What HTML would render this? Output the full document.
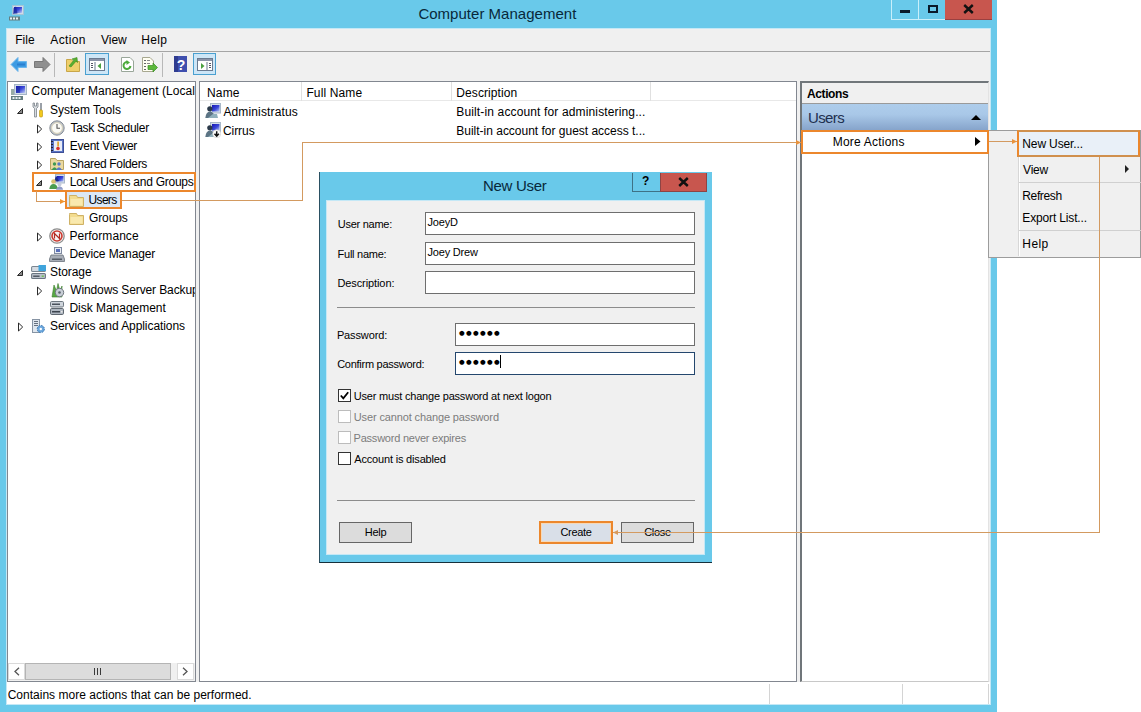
<!DOCTYPE html>
<html><head><meta charset="utf-8"><title>Computer Management</title>
<style>
*{box-sizing:border-box;margin:0;padding:0}
html,body{width:1141px;height:712px;overflow:hidden;background:#fff}
body{position:relative;font-family:"Liberation Sans",sans-serif;font-size:12px;color:#000}
.a{position:absolute}
.t{position:absolute;white-space:nowrap;line-height:18px;height:18px}
.win{left:0;top:0;width:997px;height:712px;background:#69c9ea}
.client{left:7px;top:29px;width:983px;height:675px;background:#f0f0f0}
.pane{background:#fff;border:1px solid #828790}
.ol{position:absolute;background:#d39a60}
.ob{position:absolute;border:2px solid #ec872c}
.dlg{font-size:11px}
.dlg .t{line-height:14px;height:14px}
.inp{position:absolute;background:#fff;border:1px solid #6e6e6e;height:23px}
.btn{position:absolute;background:#dcdcdc;border:1px solid #666;text-align:center;line-height:19px;font-size:11px;letter-spacing:-0.3px}
.cb{position:absolute;width:13px;height:13px;background:#fff;border:1px solid #333}
.cb.dis{border-color:#bcbcbc}
.gray{color:#7c7c7c}
</style></head><body>
<div class="a win"></div>
<!-- title -->
<div class="t" id="title" style="left:418.4px;top:4px;font-size:15px;line-height:20px;height:20px;letter-spacing:0.02px;color:#08283a">Computer Management</div>
<div class="a" style="left:6px;top:28px;width:985px;height:677px;background:#c4e8f6"></div>
<div class="a client"></div>
<!-- caption buttons -->
<div class="a" style="left:891px;top:0;width:55px;height:20px;border:1px solid #c9effa;border-top:0"></div>
<div class="a" style="left:918px;top:0;width:1px;height:19px;background:#c9effa"></div>
<div class="a" style="left:900px;top:10px;width:10px;height:3px;background:#0a1a2a"></div>
<div class="a" style="left:928px;top:5px;width:10px;height:8px;border:2px solid #0a1a2a;border-top-width:2px"></div>
<div class="a" style="left:945px;top:0;width:47px;height:20px;background:#c8564e;border-bottom:1px solid #9a4040"></div>
<svg class="a" style="left:963px;top:4px" width="11" height="10" viewBox="0 0 11 10"><path d="M1.2 1 L9.8 9 M9.8 1 L1.2 9" stroke="#111" stroke-width="2.4" fill="none"/></svg>
<!-- app icon -->
<svg class="a" style="left:8px;top:4px" width="17" height="17" viewBox="0 0 17 17"><defs><linearGradient id="ag" x1="0" y1="0" x2="1" y2="1"><stop offset="0" stop-color="#1414b4"/><stop offset=".5" stop-color="#3a48d8"/><stop offset="1" stop-color="#c0ccf4"/></linearGradient></defs><rect x="4.500" y="1.500" width="11" height="9" fill="#cfdbe8" stroke="#a4c4d8"/><rect x="6" y="3" width="8" height="6" fill="url(#ag)"/><path d="M5 10 L5.500 4 L8 2.500 L9.500 9.500 Z" fill="#1a2a9a" opacity=".7"/><rect x="1" y="12.500" width="11" height="4" fill="#647e80"/><rect x="2" y="13.500" width="2" height="2" fill="#e6eef0"/><rect x="5" y="13.500" width="2" height="2" fill="#e6eef0"/><rect x="8" y="13.500" width="2" height="2" fill="#e6eef0"/></svg>
<!-- menu -->
<div class="t" id="mn0" style="left:15.2px;top:31px;letter-spacing:0.01px">File</div>
<div class="t" id="mn1" style="left:50.3px;top:31px;letter-spacing:0.36px">Action</div>
<div class="t" id="mn2" style="left:101.1px;top:31px;letter-spacing:-0.07px">View</div>
<div class="t" id="mn3" style="left:141.3px;top:31px;letter-spacing:0.35px">Help</div>
<div class="a" style="left:7px;top:51px;width:983px;height:1px;background:#a5a5a5"></div>

<!-- toolbar -->
<svg class="a" style="left:7px;top:52px" width="230" height="29" viewBox="7 52 230 29">
<!-- back -->
<path d="M11 64.5 L18 57.5 L18 61.5 L26.5 61.5 L26.5 67.5 L18 67.5 L18 71.5 Z" fill="#3d9be3" stroke="#6cb6ec" stroke-width="1"/>
<rect x="17" y="63.5" width="8" height="2" fill="#2a7fd0"/>
<!-- forward -->
<path d="M50 64.5 L43 57.5 L43 61.5 L34.5 61.5 L34.5 67.5 L43 67.5 L43 71.5 Z" fill="#8f8f8f" stroke="#777" stroke-width="1"/>
<rect x="54" y="53" width="1" height="24" fill="#b8b8b8"/>
<!-- folder up -->
<path d="M66.5 61 L66.5 71.5 L79.5 71.5 L79.5 61.5 L73 61.5 L71.5 59.5 L66.5 59.5 Z" fill="#efcf6a" stroke="#c9a648"/>
<path d="M69 66 L74 60 L72 59 L77 57.5 L77.5 62.5 L76 61.2 L71 67 Z" fill="#58b030" stroke="#3c8c20" stroke-width=".6"/>
<!-- show/hide tree (pressed) -->
<rect x="85.5" y="53.500" width="23" height="21" fill="#cde6f7" stroke="#4aa0d0"/>
<rect x="89.500" y="58.500" width="15" height="12" fill="#fff" stroke="#6a7a90"/>
<rect x="90" y="59" width="14" height="2" fill="#8b93a8"/>
<rect x="94.500" y="62" width="1" height="8" fill="#6a7a90"/>
<rect x="91" y="63" width="2" height="1" fill="#556"/><rect x="91" y="65" width="2" height="1" fill="#556"/><rect x="91" y="67" width="2" height="1" fill="#556"/>
<path d="M101 63 L101 69 L97.500 66 Z" fill="#4aa040"/>
<!-- refresh -->
<path d="M121.500 57.500 L130 57.500 L133.500 61 L133.500 71.500 L121.500 71.500 Z" fill="#fff" stroke="#9aa79a"/>
<path d="M130.500 66 A3.500 3.500 0 1 1 127.500 62" fill="none" stroke="#4caa3c" stroke-width="2"/>
<path d="M126.500 60 L130 62.500 L126.500 65 Z" fill="#4caa3c"/>
<!-- export -->
<path d="M142.500 57.500 L150 57.500 L153.500 61 L153.500 71.500 L142.500 71.500 Z" fill="#fffef2" stroke="#a8a890"/>
<rect x="144" y="60" width="2" height="1" fill="#666"/><rect x="147" y="60" width="3" height="1" fill="#888"/>
<rect x="144" y="63" width="2" height="1" fill="#666"/><rect x="147" y="63" width="3" height="1" fill="#888"/>
<rect x="144" y="66" width="2" height="1" fill="#666"/><rect x="144" y="69" width="2" height="1" fill="#666"/>
<path d="M148 65.500 L153 65.500 L153 63 L157.500 67.500 L153 72 L153 69.500 L148 69.500 Z" fill="#5cb83a" stroke="#3a8c24" stroke-width=".7"/>
<rect x="162" y="53" width="1" height="24" fill="#b8b8b8"/>
<!-- help -->
<rect x="174" y="56" width="13" height="16" fill="#3f4fae"/>
<rect x="174" y="56" width="4" height="16" fill="#2f3c90"/>
<text x="181" y="69.500" font-family="Liberation Sans,sans-serif" font-weight="bold" font-size="14" fill="#fff" text-anchor="middle">?</text>
<!-- action pane (pressed) -->
<rect x="193.500" y="53.500" width="22" height="21" fill="#cde6f7" stroke="#4aa0d0"/>
<rect x="197.500" y="58.500" width="15" height="12" fill="#fff" stroke="#6a7a90"/>
<rect x="198" y="59" width="14" height="2" fill="#8b93a8"/>
<rect x="206.500" y="62" width="1" height="8" fill="#6a7a90"/>
<rect x="209" y="63" width="2" height="1" fill="#556"/><rect x="209" y="65" width="2" height="1" fill="#556"/><rect x="209" y="67" width="2" height="1" fill="#556"/>
<path d="M201 63 L201 69 L204.500 66 Z" fill="#4aa040"/>
</svg>

<!-- panes -->
<div class="a pane" style="left:7px;top:81px;width:189px;height:601px"></div>
<div class="a pane" style="left:199px;top:81px;width:598px;height:601px"></div>
<div class="a pane" style="left:800px;top:81px;width:189px;height:601px;border-left:2px solid #70767a;border-top:2px solid #70767a;border-right:1px solid #e3e3e3;border-bottom:1px solid #c8c8c8"></div>
<!-- tree -->
<div class="a" style="left:0;top:0;width:195px;height:681px;overflow:hidden">
<div class="a" style="left:66px;top:191px;width:55px;height:17px;background:#dbe8f6"></div>
<svg class="a" style="left:10px;top:84px" width="17" height="16" viewBox="0 0 17 16"><defs><linearGradient id="cg" x1="0" y1="0" x2="1" y2="1"><stop offset="0" stop-color="#1414b4"/><stop offset=".5" stop-color="#3a48d8"/><stop offset="1" stop-color="#c0ccf4"/></linearGradient></defs><rect x="4.500" y=".5" width="12" height="10" fill="#cfdbe8" stroke="#a4b4c6"/><rect x="6" y="2" width="9" height="7" fill="url(#cg)"/><path d="M6 9 L6 4 L8 2 L10 2 L10 9 Z" fill="#1a2a9a" opacity=".55"/><rect x="1" y="12" width="12" height="4" fill="#647e80"/><rect x="2.500" y="13" width="2" height="2" fill="#e6eef0"/><rect x="5.500" y="13" width="2" height="2" fill="#e6eef0"/><rect x="8.500" y="13" width="2" height="2" fill="#e6eef0"/><rect x="1" y="5" width="3" height="6" fill="#6c8a80" opacity=".7"/></svg>
<div class="t" id="tr0" style="left:31.6px;top:82px;letter-spacing:0.05px">Computer Management (Local</div>
<svg class="a" style="left:30px;top:102px" width="16" height="16" viewBox="0 0 16 16"><path d="M3 1 L3 5 L4.500 6.500 L4.500 15 L6.500 15 L6.500 6.500 L8 5 L8 1 L6.500 1 L6.500 4 L4.500 4 L4.500 1 Z" fill="#d8dce0" stroke="#7c848c" stroke-width=".8"/><rect x="10" y="1" width="2" height="7" fill="#9aa0a8"/><rect x="9.500" y="8" width="3" height="7" rx="1" fill="#f2c81e" stroke="#b8920a" stroke-width=".6"/></svg>
<svg class="a" style="left:16px;top:107px" width="8" height="8" viewBox="0 0 8 8"><path d="M6.500 1.500 L6.500 6.500 L1.500 6.500 Z" fill="#8a8a8a" stroke="#2a2a2a" stroke-width="1"/></svg>
<div class="t" id="tr1" style="left:50.0px;top:101px;letter-spacing:-0.02px">System Tools</div>
<svg class="a" style="left:49px;top:120px" width="16" height="16" viewBox="0 0 16 16"><circle cx="8" cy="8" r="7.200" fill="#b9c0c8" stroke="#8a9098"/><circle cx="8" cy="8" r="5.400" fill="#fbfbf6" stroke="#d9d2b8"/><path d="M8 4 L8 8.300 L11 8.300" stroke="#555" stroke-width="1.100" fill="none"/></svg>
<svg class="a" style="left:36px;top:124px" width="7" height="10" viewBox="0 0 7 10"><path d="M1.500 1 L5.700 5 L1.500 9 Z" fill="#fff" stroke="#2a2a2a" stroke-width="1"/></svg>
<div class="t" id="tr2" style="left:70.4px;top:119px;letter-spacing:-0.25px">Task Scheduler</div>
<svg class="a" style="left:49px;top:138px" width="16" height="16" viewBox="0 0 16 16"><rect x="2.500" y="1.500" width="12" height="13" fill="#5b76c6" stroke="#3d4f96"/><rect x="5" y="3" width="8" height="10" fill="#e8ecf6"/><rect x="2" y="3" width="2" height="1" fill="#223"/><rect x="2" y="6" width="2" height="1" fill="#223"/><rect x="2" y="9" width="2" height="1" fill="#223"/><rect x="2" y="12" width="2" height="1" fill="#223"/><rect x="8.300" y="3.500" width="1.600" height="5" fill="#e0a020"/><circle cx="9" cy="10.500" r="1.800" fill="#d8302a"/></svg>
<svg class="a" style="left:36px;top:142px" width="7" height="10" viewBox="0 0 7 10"><path d="M1.500 1 L5.700 5 L1.500 9 Z" fill="#fff" stroke="#2a2a2a" stroke-width="1"/></svg>
<div class="t" id="tr3" style="left:69.8px;top:137px;letter-spacing:-0.27px">Event Viewer</div>
<svg class="a" style="left:49px;top:156px" width="16" height="16" viewBox="0 0 16 16"><path d="M1.500 4 L1.500 13.500 L14.500 13.500 L14.500 4.500 L8 4.500 L6.500 2.500 L1.500 2.500 Z" fill="#ead9a0" stroke="#b9a562"/><circle cx="5.500" cy="8" r="1.700" fill="#3f9a52"/><path d="M2.500 14 Q5.500 8.500 8.500 14 Z" fill="#3f9a52"/><circle cx="10" cy="8" r="1.700" fill="#577ac8"/><path d="M7 14 Q10 8.500 13 14 Z" fill="#577ac8"/></svg>
<svg class="a" style="left:36px;top:160px" width="7" height="10" viewBox="0 0 7 10"><path d="M1.500 1 L5.700 5 L1.500 9 Z" fill="#fff" stroke="#2a2a2a" stroke-width="1"/></svg>
<div class="t" id="tr4" style="left:69.7px;top:155px;letter-spacing:-0.34px">Shared Folders</div>
<svg class="a" style="left:49px;top:174px" width="16" height="16" viewBox="0 0 16 16"><defs><linearGradient id="lg5" x1="0" y1="0" x2="1" y2="1"><stop offset="0" stop-color="#1414b4"/><stop offset=".55" stop-color="#3a48d8"/><stop offset="1" stop-color="#b8c8f4"/></linearGradient></defs><rect x="6.500" y=".5" width="9" height="8.500" fill="#d3deea" stroke="#a9b8c8"/><rect x="8" y="2" width="6.500" height="5.500" fill="url(#lg5)"/><path d="M5 8 L7 1.500 L10 7 Z" fill="#1c2a8c"/><circle cx="4.500" cy="7.500" r="2.300" fill="#d8c070"/><path d="M.3 15 Q1 10 4.500 10 Q8 10 9 15 Z" fill="#4a9c50"/><circle cx="10.500" cy="10.500" r="2" fill="#c6ccdc"/><path d="M7 15.800 Q8 12.500 10.500 12.500 Q13.500 12.500 14 15.800 Z" fill="#8f9cc8"/></svg>
<svg class="a" style="left:35px;top:179px" width="8" height="8" viewBox="0 0 8 8"><path d="M6.500 1.500 L6.500 6.500 L1.500 6.500 Z" fill="#8a8a8a" stroke="#2a2a2a" stroke-width="1"/></svg>
<div class="t" id="tr5" style="left:69.8px;top:173px;letter-spacing:-0.26px">Local Users and Groups</div>
<svg class="a" style="left:68px;top:192px" width="16" height="16" viewBox="0 0 16 16"><path d="M1.500 4.500 L1.500 14.500 L15.500 14.500 L15.500 5.500 L9.500 5.500 L8.500 3.500 L1.500 3.500 Z" fill="#f3dc8e" stroke="#cfb266"/><path d="M2.500 7 L14.500 7 L14.500 13.500 L2.500 13.500 Z" fill="#f9e9ae"/></svg>
<div class="t" id="tr6" style="left:88.6px;top:191px;letter-spacing:-0.69px">Users</div>
<svg class="a" style="left:68px;top:210px" width="16" height="16" viewBox="0 0 16 16"><path d="M1.500 4.500 L1.500 14.500 L15.500 14.500 L15.500 5.500 L9.500 5.500 L8.500 3.500 L1.500 3.500 Z" fill="#f3dc8e" stroke="#cfb266"/><path d="M2.500 7 L14.500 7 L14.500 13.500 L2.500 13.500 Z" fill="#f9e9ae"/></svg>
<div class="t" id="tr7" style="left:89.0px;top:209px;letter-spacing:-0.12px">Groups</div>
<svg class="a" style="left:49px;top:228px" width="16" height="16" viewBox="0 0 16 16"><circle cx="8" cy="8" r="7.200" fill="#f6f6f6" stroke="#8d8d8d" stroke-width="1.300"/><circle cx="8" cy="8" r="5" fill="none" stroke="#cc3a30" stroke-width="1.600"/><path d="M5.500 10.500 L5.500 5.500 L10.500 10.500 L10.500 5.500" stroke="#b02a22" stroke-width="1.200" fill="none"/></svg>
<svg class="a" style="left:36px;top:232px" width="7" height="10" viewBox="0 0 7 10"><path d="M1.500 1 L5.700 5 L1.500 9 Z" fill="#fff" stroke="#2a2a2a" stroke-width="1"/></svg>
<div class="t" id="tr8" style="left:69.4px;top:227px;letter-spacing:0.05px">Performance</div>
<svg class="a" style="left:49px;top:246px" width="16" height="16" viewBox="0 0 16 16"><rect x="5.500" y="1.500" width="7" height="6" fill="#e8edf5" stroke="#7f8aa0"/><rect x="7" y="3" width="4" height="3" fill="#5a6fb8"/><path d="M2 9 L14 9 L15.500 13 L15.500 15.500 L.5 15.500 L.5 13 Z" fill="#a7adb6" stroke="#6c737d" stroke-width=".8"/><rect x="3" y="12.500" width="10" height="1.500" fill="#555c66"/></svg>
<div class="t" id="tr9" style="left:69.4px;top:245px;letter-spacing:-0.11px">Device Manager</div>
<svg class="a" style="left:29.500px;top:264px" width="17" height="16" viewBox="0 0 16 16" preserveAspectRatio="none"><rect x="1.500" y="2.500" width="13" height="5" rx="1" fill="#d5dbe2" stroke="#7a8590"/><rect x="1.500" y="9.500" width="13" height="5" rx="1" fill="#b8c0ca" stroke="#6a7580"/><rect x="8" y="1" width="7" height="6" fill="#3fa4dc"/><rect x="3" y="11.500" width="6" height="1.400" fill="#4a525c"/><rect x="11" y="11.500" width="2" height="1.400" fill="#6cc04a"/></svg>
<svg class="a" style="left:16px;top:269px" width="8" height="8" viewBox="0 0 8 8"><path d="M6.500 1.500 L6.500 6.500 L1.500 6.500 Z" fill="#8a8a8a" stroke="#2a2a2a" stroke-width="1"/></svg>
<div class="t" id="tr10" style="left:50.0px;top:263px;letter-spacing:-0.08px">Storage</div>
<svg class="a" style="left:49px;top:282px" width="16" height="16" viewBox="0 0 16 16"><path d="M3 15 L5 3 L7.500 9 L9 1.500 L11 9 L13 4 L13 15 Z" fill="#58a844" stroke="#3a7c2c" stroke-width=".6"/><circle cx="10.500" cy="10.500" r="4.200" fill="#c8ced6" stroke="#707880"/><circle cx="10.500" cy="10.500" r="1.300" fill="#5a626c"/></svg>
<svg class="a" style="left:36px;top:286px" width="7" height="10" viewBox="0 0 7 10"><path d="M1.500 1 L5.700 5 L1.500 9 Z" fill="#fff" stroke="#2a2a2a" stroke-width="1"/></svg>
<div class="t" id="tr11" style="left:70.2px;top:281px;letter-spacing:-0.11px">Windows Server Backup</div>
<svg class="a" style="left:49px;top:300px" width="16" height="16" viewBox="0 0 16 16"><rect x="1.500" y="1.500" width="13" height="5.500" rx="1.200" fill="#cfd5dc" stroke="#6e7780"/><rect x="1.500" y="8.500" width="13" height="6" rx="1.200" fill="#aeb6c0" stroke="#5e6770"/><rect x="3" y="3.500" width="8" height="1.500" fill="#4a525c"/><rect x="3" y="11" width="8" height="1.500" fill="#3c444e"/><rect x="12" y="11" width="1.500" height="1.500" fill="#e8e8e8"/></svg>
<div class="t" id="tr12" style="left:69.4px;top:299px;letter-spacing:-0.02px">Disk Management</div>
<svg class="a" style="left:30px;top:318px" width="16" height="16" viewBox="0 0 16 16"><rect x="2.500" y="1.500" width="7" height="13" fill="#dfe6ee" stroke="#8794a4"/><rect x="4" y="3" width="4" height="1" fill="#66717f"/><rect x="4" y="5" width="4" height="1" fill="#66717f"/><rect x="4" y="7" width="4" height="1" fill="#66717f"/><circle cx="10.800" cy="11" r="3.600" fill="#6aa6dc" stroke="#3f78b0" stroke-width="1" stroke-dasharray="1.600 1.200"/><circle cx="10.800" cy="11" r="1.200" fill="#fff"/></svg>
<svg class="a" style="left:17px;top:322px" width="7" height="10" viewBox="0 0 7 10"><path d="M1.500 1 L5.700 5 L1.500 9 Z" fill="#fff" stroke="#2a2a2a" stroke-width="1"/></svg>
<div class="t" id="tr13" style="left:50.0px;top:317px;letter-spacing:-0.07px">Services and Applications</div>
</div>
<div class="a" style="left:8px;top:663px;width:187px;height:18px;background:#f0f0f0"></div>
<div class="a" style="left:8px;top:663px;width:17px;height:17px;background:#fff;border:1px solid #dadada"></div>
<div class="a" style="left:177px;top:663px;width:17px;height:17px;background:#fff;border:1px solid #dadada"></div>
<div class="a" style="left:25px;top:663px;width:146px;height:17px;background:#dcdcdc;border:1px solid #b4b4b4"></div>
<svg class="a" style="left:13px;top:667px" width="8" height="9" viewBox="0 0 8 9"><path d="M6 .8 L2 4.500 L6 8.200" fill="none" stroke="#555" stroke-width="1.300"/></svg>
<svg class="a" style="left:181px;top:667px" width="8" height="9" viewBox="0 0 8 9"><path d="M2 .8 L6 4.500 L2 8.200" fill="none" stroke="#555" stroke-width="1.300"/></svg>
<div class="a" style="left:94px;top:668px;width:1px;height:7px;background:#3a3a3a;box-shadow:3px 0 0 #3a3a3a,6px 0 0 #3a3a3a"></div>

<!-- list -->
<div class="a" style="left:200px;top:82px;width:596px;height:19px;background:#fff;border-bottom:1px solid #e8e8e8"></div>
<div class="a" style="left:301px;top:82px;width:1px;height:19px;background:#e0e0e0"></div>
<div class="a" style="left:451px;top:82px;width:1px;height:19px;background:#e0e0e0"></div>
<div class="a" style="left:650px;top:82px;width:1px;height:19px;background:#e0e0e0"></div>
<div class="t" id="h0" style="left:206.9px;top:84px;letter-spacing:0.20px">Name</div>
<div class="t" id="h1" style="left:306.4px;top:84px;letter-spacing:0.13px">Full Name</div>
<div class="t" id="h2" style="left:456.3px;top:84px;letter-spacing:0.09px">Description</div>
<svg class="a" style="left:205px;top:103px" width="16" height="16" viewBox="0 0 16 16"><defs><linearGradient id="ug0" x1="0" y1="0" x2="1" y2="1"><stop offset="0" stop-color="#1414b4"/><stop offset=".55" stop-color="#3a48d8"/><stop offset="1" stop-color="#b8c8f4"/></linearGradient></defs><rect x="5.500" y=".5" width="10" height="9.500" fill="#d3deea" stroke="#a9b8c8"/><rect x="7" y="2" width="7.500" height="6.500" fill="url(#ug0)"/><circle cx="4.800" cy="5.800" r="2.600" fill="#2c3a4a"/><path d="M.3 15 Q1 8.500 5 8.500 Q9 8.500 10 15 Z" fill="#5c7484"/><path d="M3 15 L13 15 L12 11 L8 11 Z" fill="#8fb0bc"/></svg>
<svg class="a" style="left:205px;top:122px" width="16" height="16" viewBox="0 0 16 16"><defs><linearGradient id="ug1" x1="0" y1="0" x2="1" y2="1"><stop offset="0" stop-color="#1414b4"/><stop offset=".55" stop-color="#3a48d8"/><stop offset="1" stop-color="#b8c8f4"/></linearGradient></defs><rect x="5.500" y=".5" width="10" height="9.500" fill="#d3deea" stroke="#a9b8c8"/><rect x="7" y="2" width="7.500" height="6.500" fill="url(#ug1)"/><circle cx="4.800" cy="5.800" r="2.600" fill="#2c3a4a"/><path d="M.3 15 Q1 8.500 5 8.500 Q9 8.500 10 15 Z" fill="#5c7484"/><path d="M3 15 L13 15 L12 11 L8 11 Z" fill="#8fb0bc"/><circle cx="11.700" cy="11.800" r="4" fill="#fff" stroke="#c8c8c8" stroke-width=".6"/><path d="M11.700 9.200 L11.700 14 M9.500 11.800 L11.700 14.200 L13.900 11.800" stroke="#111" stroke-width="1.500" fill="none"/></svg>
<div class="t" id="l0" style="left:223.4px;top:103px;letter-spacing:0.14px">Administratus</div>
<div class="t" id="l1" style="left:223.0px;top:122px;letter-spacing:-0.07px">Cirrus</div>
<div class="t" id="l2" style="left:456.3px;top:103px;letter-spacing:0.14px">Built-in account for administering...</div>
<div class="t" id="l3" style="left:456.3px;top:122px;letter-spacing:-0.01px">Built-in account for guest access t...</div>

<!-- actions -->
<div class="a" style="left:802px;top:83px;width:186px;height:20px;background:#f0f0f0"></div>
<div class="a" style="left:802px;top:103px;width:186px;height:1px;background:#9a9a9a"></div>
<div class="t" id="ac0" style="left:807.0px;top:85px;font-weight:bold;letter-spacing:-0.39px">Actions</div>
<div class="a" style="left:802px;top:104px;width:186px;height:26px;background:linear-gradient(#aecdeb,#a9c8e8 40%,#86a4cb)"></div>
<div class="t" id="ac1" style="left:808.0px;top:107px;font-size:15px;line-height:22px;height:22px;color:#1e3050;letter-spacing:-0.62px">Users</div>
<svg class="a" style="left:971px;top:115px" width="10" height="5" viewBox="0 0 10 5"><path d="M0 5 L5 0 L10 5 Z" fill="#000"/></svg>
<div class="t" id="ac2" style="left:832.7px;top:133px;letter-spacing:0.22px">More Actions</div>
<svg class="a" style="left:975px;top:137px" width="6" height="9" viewBox="0 0 6 9"><path d="M0 0 L5.500 4.500 L0 9 Z" fill="#000"/></svg>

<!-- status -->
<div class="a" style="left:7px;top:682px;width:983px;height:22px;background:#fff"></div>
<div class="a" style="left:769px;top:684px;width:1px;height:20px;background:#d4d4d4"></div>
<div class="a" style="left:902px;top:684px;width:1px;height:20px;background:#d4d4d4"></div>
<div class="a" style="left:988px;top:684px;width:1px;height:20px;background:#d4d4d4"></div>
<div class="t" id="st" style="left:7.7px;top:686px;letter-spacing:0.01px">Contains more actions that can be performed.</div>

<!-- dialog -->
<div class="a dlg" style="left:0;top:0;width:0;height:0">
<div class="a" style="left:319px;top:172px;width:393px;height:391px;background:#69c9ea;border-left:1px solid #2a5062;border-bottom:1px solid #16303c"></div>
<div class="a" style="left:326px;top:200px;width:379px;height:355px;background:#c4e8f6"></div>
<div class="a" style="left:327px;top:201px;width:377px;height:353px;background:#f0f0f0"></div>
<div class="t" id="dt" style="left:482.9px;top:176px;font-size:15px;line-height:20px;height:20px;letter-spacing:-0.28px;color:#08283a">New User</div>
<div class="a" style="left:632px;top:173px;width:29px;height:19px;border-left:1px solid #3e7286;border-bottom:1px solid #3e7286"></div>
<div class="t" style="left:642px;top:173px;font-size:12px;font-weight:bold;line-height:17px;height:17px">?</div>
<div class="a" style="left:660px;top:173px;width:47px;height:19px;background:#c8564e;border:1px solid #8e4444;border-top:0"></div>
<svg class="a" style="left:678px;top:177px" width="11" height="10" viewBox="0 0 11 10"><path d="M1.200 1 L9.800 9 M9.800 1 L1.200 9" stroke="#111" stroke-width="2.400" fill="none"/></svg>
<div class="t" id="d0" style="left:337.7px;top:217px;letter-spacing:-0.25px">User name:</div>
<div class="t" id="d1" style="left:337.6px;top:247px;letter-spacing:-0.26px">Full name:</div>
<div class="t" id="d2" style="left:337.4px;top:276px;letter-spacing:-0.09px">Description:</div>
<div class="inp" style="left:425px;top:212px;width:270px"></div>
<div class="inp" style="left:425px;top:242px;width:270px"></div>
<div class="inp" style="left:425px;top:271px;width:270px"></div>
<div class="t" id="d3" style="left:427.5px;top:215px;letter-spacing:-0.20px">JoeyD</div>
<div class="t" id="d4" style="left:427.5px;top:245px;letter-spacing:-0.20px">Joey Drew</div>
<div class="a" style="left:337px;top:307px;width:358px;height:1px;background:#8c8c8c"></div>
<div class="t" id="d5" style="left:336.9px;top:328px;letter-spacing:-0.12px">Password:</div>
<div class="t" id="d6" style="left:337.2px;top:357px;letter-spacing:-0.27px">Confirm password:</div>
<div class="inp" style="left:455px;top:323px;width:240px"></div>
<div class="inp" style="left:455px;top:352px;width:240px;border-color:#24476e"></div>
<div class="t" id="d7" style="left:459px;top:325px;font-family:'DejaVu Sans',sans-serif;font-size:6.500px;letter-spacing:1.310px;line-height:16px;height:16px">&#9679;&#9679;&#9679;&#9679;&#9679;&#9679;</div>
<div class="t" id="d8" style="left:459px;top:354px;font-family:'DejaVu Sans',sans-serif;font-size:6.500px;letter-spacing:1.310px;line-height:16px;height:16px">&#9679;&#9679;&#9679;&#9679;&#9679;&#9679;</div>
<div class="a" style="left:500px;top:355px;width:1px;height:13px;background:#000"></div>
<div class="cb" style="left:338px;top:389px"></div>
<svg class="a" style="left:340px;top:391px" width="9" height="9" viewBox="0 0 9 9"><path d="M.8 4.500 L3.300 7.300 L8.200 1.200" stroke="#000" stroke-width="1.800" fill="none"/></svg>
<div class="cb dis" style="left:338px;top:410px"></div>
<div class="cb dis" style="left:338px;top:431px"></div>
<div class="cb" style="left:338px;top:452px"></div>
<div class="t" id="c0" style="left:353.8px;top:389px;letter-spacing:-0.20px">User must change password at next logon</div>
<div class="t gray" id="c1" style="left:353.8px;top:410px;letter-spacing:-0.13px">User cannot change password</div>
<div class="t gray" id="c2" style="left:353.6px;top:431px;letter-spacing:-0.23px">Password never expires</div>
<div class="t" id="c3" style="left:354.3px;top:452px;letter-spacing:-0.18px">Account is disabled</div>
<div class="a" style="left:337px;top:500px;width:358px;height:1px;background:#8c8c8c"></div>
<div class="btn" style="left:339px;top:522px;width:73px;height:21px">Help</div>
<div class="btn" style="left:541px;top:523px;width:70px;height:19px;background:#d9dfe8;border:1px solid #f6d9b8;line-height:17px">Create</div>
<div class="btn" style="left:621px;top:522px;width:73px;height:21px">Close</div>
</div>

<!-- context menu -->
<div class="a" style="left:988px;top:130px;width:153px;height:128px;background:#f0f0f0;border:1px solid #9c9c9c"></div>
<div class="a" style="left:1018px;top:132px;width:1px;height:124px;background:#d7d7d7"></div>
<div class="a" style="left:1019px;top:132px;width:1px;height:124px;background:#fff"></div>
<div class="a" style="left:1018px;top:131px;width:122px;height:25px;background:#e9f0f8"></div>
<div class="t" id="m0" style="left:1022.3px;top:135px;letter-spacing:-0.13px">New User...</div>
<div class="t" id="m1" style="left:1023.1px;top:161px;letter-spacing:-0.24px">View</div>
<svg class="a" style="left:1125px;top:165px" width="4" height="8" viewBox="0 0 4 8"><path d="M0 0 L4 4 L0 8 Z" fill="#222"/></svg>
<div class="a" style="left:1019px;top:182px;width:122px;height:1px;background:#d0d0d0"></div>
<div class="t" id="m2" style="left:1022.3px;top:187px;letter-spacing:-0.37px">Refresh</div>
<div class="t" id="m3" style="left:1022.3px;top:209px;letter-spacing:-0.15px">Export List...</div>
<div class="a" style="left:1019px;top:230px;width:122px;height:1px;background:#d0d0d0"></div>
<div class="t" id="m4" style="left:1022.3px;top:235px;letter-spacing:0.42px">Help</div>

<!-- orange annotations -->
<div class="ob" style="left:32px;top:172px;width:164px;height:20px"></div>
<div class="ob" style="left:65px;top:190px;width:57px;height:19px"></div>
<div class="ol" style="left:36px;top:191px;width:1px;height:11px"></div>
<div class="ol" style="left:36px;top:201px;width:29px;height:1px"></div>
<svg class="a" style="left:60px;top:199px" width="5" height="5" viewBox="0 0 5 5"><path d="M0 0 L5 2.500 L0 5 Z" fill="#f0942f"/></svg>
<div class="ol" style="left:122px;top:200px;width:181px;height:1px"></div>
<div class="ol" style="left:302px;top:142px;width:1px;height:59px"></div>
<div class="ol" style="left:302px;top:142px;width:500px;height:1px"></div>
<div class="ob" style="left:801px;top:130px;width:188px;height:24px"></div>
<div class="ol" style="left:989px;top:141px;width:29px;height:1px"></div>
<div class="ob" style="left:1017px;top:130px;width:123px;height:27px;border-top-color:#d0904e;border-bottom-color:#d0904e"></div>
<div class="ol" style="left:1099px;top:157px;width:1px;height:376px"></div>
<div class="ol" style="left:613px;top:532px;width:487px;height:1px"></div>
<div class="ob" style="left:539px;top:521px;width:74px;height:23px"></div>

<svg class="a" style="left:613px;top:530px" width="5" height="5" viewBox="0 0 5 5"><path d="M5 0 L0 2.500 L5 5 Z" fill="#d89a5c"/></svg>
<svg class="a" style="left:1012px;top:139px" width="5" height="5" viewBox="0 0 5 5"><path d="M0 0 L5 2.500 L0 5 Z" fill="#e8923c"/></svg>
<svg class="a" style="left:796px;top:140px" width="5" height="5" viewBox="0 0 5 5"><path d="M0 0 L5 2.500 L0 5 Z" fill="#e8923c"/></svg>
</body></html>
